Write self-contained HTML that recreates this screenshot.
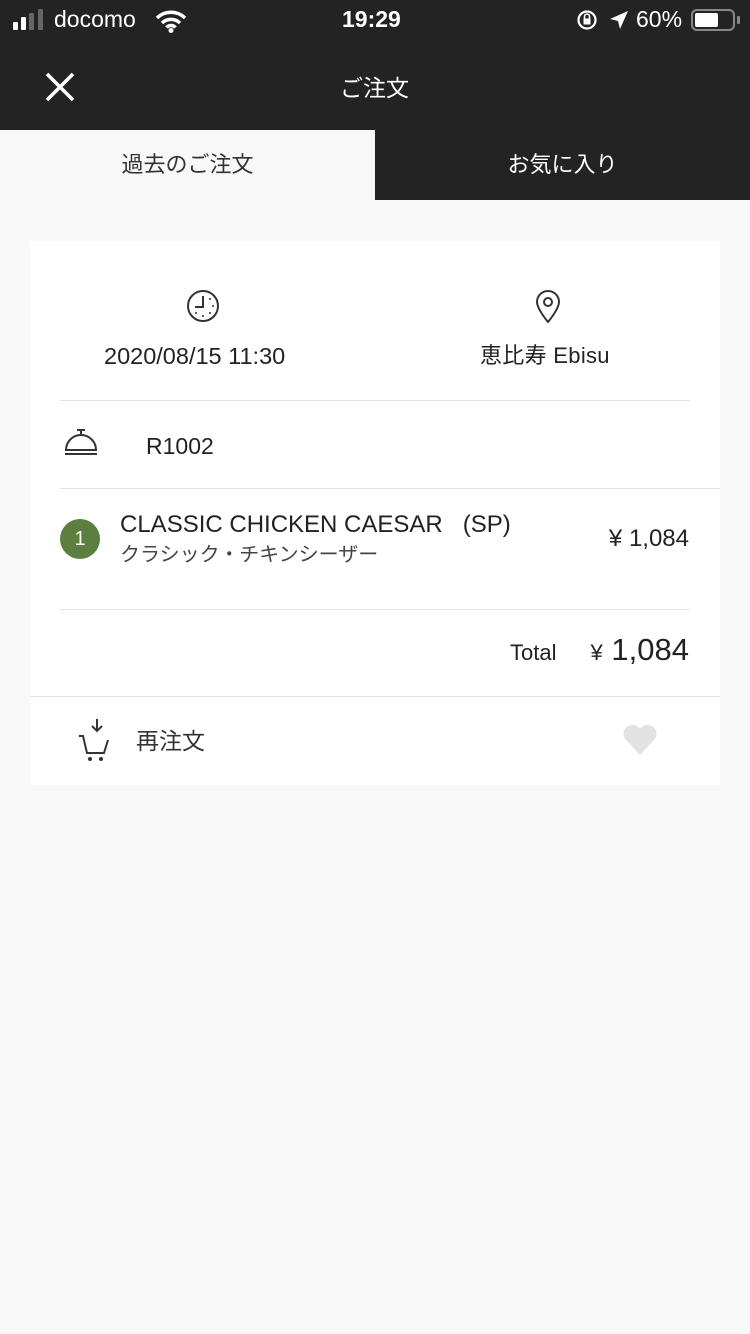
<!DOCTYPE html>
<html><head><meta charset="utf-8"><style>
*{margin:0;padding:0;box-sizing:border-box}
body{width:750px;height:1334px;background:#f8f8f8;font-family:"Liberation Sans","Noto Sans CJK JP",sans-serif;position:relative;overflow:hidden;color:#222}
.a{position:absolute;white-space:nowrap;line-height:1.2}
.hdr{position:absolute;left:0;top:0;width:750px;height:130px;background:#232323}
.tabR{position:absolute;left:375px;top:130px;width:375px;height:70px;background:#232323}
.card{position:absolute;left:30px;top:241px;width:690px;height:544px;background:#fff}
.line{position:absolute;height:1px;background:#e3e3e3}
</style></head><body>
<div class="hdr"></div>
<div class="tabR"></div>
<div class="a" style="left:13px;top:22px;width:5px;height:8px;background:#fff;border-radius:1px"></div>
<div class="a" style="left:21px;top:17px;width:5px;height:13px;background:#fff;border-radius:1px"></div>
<div class="a" style="left:29px;top:13px;width:5px;height:17px;background:#666;border-radius:1px"></div>
<div class="a" style="left:38px;top:9px;width:5px;height:21px;background:#666;border-radius:1px"></div>
<div class="a" style="left:54px;top:6px;color:#fff;font-size:23px">docomo</div>
<svg class="a" style="left:155px;top:9px" width="32" height="24" viewBox="0 0 32 24"><path d="M2 9a20 20 0 0 1 28 0M7 14a13 13 0 0 1 18 0M11.5 18.5a6 6 0 0 1 9 0" stroke="#fff" stroke-width="3.5" fill="none"/><circle cx="16" cy="21.5" r="2.5" fill="#fff"/></svg>
<div class="a" style="left:342px;top:6px;color:#fff;font-size:23px;font-weight:bold">19:29</div>
<svg class="a" style="left:576px;top:9px" width="22" height="22" viewBox="0 0 22 22"><circle cx="11" cy="11" r="8.5" stroke="#fff" stroke-width="2.2" fill="none"/><rect x="7.5" y="9.5" width="7" height="6" fill="#fff"/><path d="M8.5 9.5v-2a2.5 2.5 0 0 1 5 0v2" stroke="#fff" stroke-width="1.6" fill="none"/></svg>
<svg class="a" style="left:608px;top:9px" width="22" height="22" viewBox="0 0 22 22"><path d="M20 2L2 10l8 2 2 8z" fill="#fff"/></svg>
<div class="a" style="left:636px;top:6px;color:#fff;font-size:23px">60%</div>
<div class="a" style="left:691px;top:9px;width:44px;height:22px;border:2px solid #888;border-radius:6px"></div>
<div class="a" style="left:695px;top:13px;width:23px;height:14px;background:#fff;border-radius:2px"></div>
<div class="a" style="left:737px;top:16px;width:3px;height:8px;background:#888;border-radius:1px"></div>
<svg class="a" style="left:44px;top:71px" width="32" height="32" viewBox="0 0 32 32"><path d="M3 3L29 29M29 3L3 29" stroke="#fff" stroke-width="3.5"/></svg>
<div class="a" style="left:340px;top:73px;color:#fff;font-size:23px;line-height:30px">ご注文</div>
<div class="a" style="left:0;top:150px;width:375px;text-align:center;font-size:22px;line-height:30px;color:#333">過去のご注文</div>
<div class="a" style="left:375px;top:150px;width:375px;text-align:center;font-size:22px;line-height:30px;color:#fff">お気に入り</div>
<div class="card"></div>
<svg class="a" style="left:186px;top:289px" width="34" height="34" viewBox="0 0 34 34"><circle cx="17" cy="17" r="15" stroke="#333" stroke-width="2" fill="none"/><path d="M17 7v11h-8" stroke="#333" stroke-width="2" fill="none"/><g fill="#333"><circle cx="17" cy="27" r="1"/><circle cx="27" cy="17" r="1"/><circle cx="24" cy="10" r="1"/><circle cx="24" cy="24" r="1"/><circle cx="10" cy="24" r="1"/></g></svg>
<svg class="a" style="left:534px;top:289px" width="28" height="34" viewBox="0 0 28 34"><path d="M14 33C14 33 3 20 3 13a11 11 0 0 1 22 0c0 7-11 20-11 20z" stroke="#333" stroke-width="2" fill="none"/><circle cx="14" cy="13" r="4" stroke="#333" stroke-width="2" fill="none"/></svg>
<div class="a" style="left:104px;top:341px;font-size:23.5px;line-height:30px">2020/08/15 11:30</div>
<div class="a" style="left:480px;top:341px;font-size:22px;line-height:30px;letter-spacing:0.3px">恵比寿 Ebisu</div>
<div class="line" style="left:60px;top:400px;width:630px"></div>
<svg class="a" style="left:63px;top:428px" width="36" height="30" viewBox="0 0 36 30"><path d="M3 22a15 15 0 0 1 30 0z" stroke="#333" stroke-width="2" fill="none"/><path d="M14 2h8M18 2v5" stroke="#333" stroke-width="2"/><path d="M2 26h32" stroke="#333" stroke-width="2"/></svg>
<div class="a" style="left:146px;top:431px;font-size:23px;line-height:30px">R1002</div>
<div class="line" style="left:60px;top:488px;width:660px"></div>
<div class="a" style="left:60px;top:519px;width:40px;height:40px;border-radius:50%;background:#5b7f3f;color:#fff;font-size:20px;text-align:center;line-height:40px">1</div>
<div class="a" style="left:120px;top:510px;font-size:24px;line-height:30px;color:#222">CLASSIC CHICKEN CAESAR &nbsp;&nbsp;(SP)</div>
<div class="a" style="left:120px;top:541px;font-size:20px;line-height:28px;color:#444">クラシック・チキンシーザー</div>
<div class="a" style="right:61px;top:524px;font-size:24px;line-height:30px">¥ 1,084</div>
<div class="line" style="left:60px;top:609px;width:630px"></div>
<div class="a" style="left:510px;top:638px;font-size:22px;line-height:30px">Total</div>
<div class="a" style="right:61px;top:632px;font-size:31px;line-height:36px"><span style="font-size:22px">¥</span>&nbsp;1,084</div>
<div class="line" style="left:30px;top:696px;width:690px"></div>
<svg class="a" style="left:77px;top:717px" width="36" height="46" viewBox="0 0 36 46"><path d="M20 2v12M15 9l5 5 5-5" stroke="#333" stroke-width="2" fill="none"/><path d="M2 19h4l4 17h17l4-13" stroke="#333" stroke-width="2" fill="none"/><circle cx="13" cy="42" r="2" fill="#333"/><circle cx="24" cy="42" r="2" fill="#333"/></svg>
<div class="a" style="left:136px;top:726px;font-size:23px;line-height:30px;color:#333">再注文</div>
<svg class="a" style="left:622px;top:724px" width="36" height="32" viewBox="0 0 36 32"><path d="M18 31L3 15A8.5 8.5 0 0 1 18 5a8.5 8.5 0 0 1 15 10z" fill="#e2e2e2"/></svg>
</body></html>
